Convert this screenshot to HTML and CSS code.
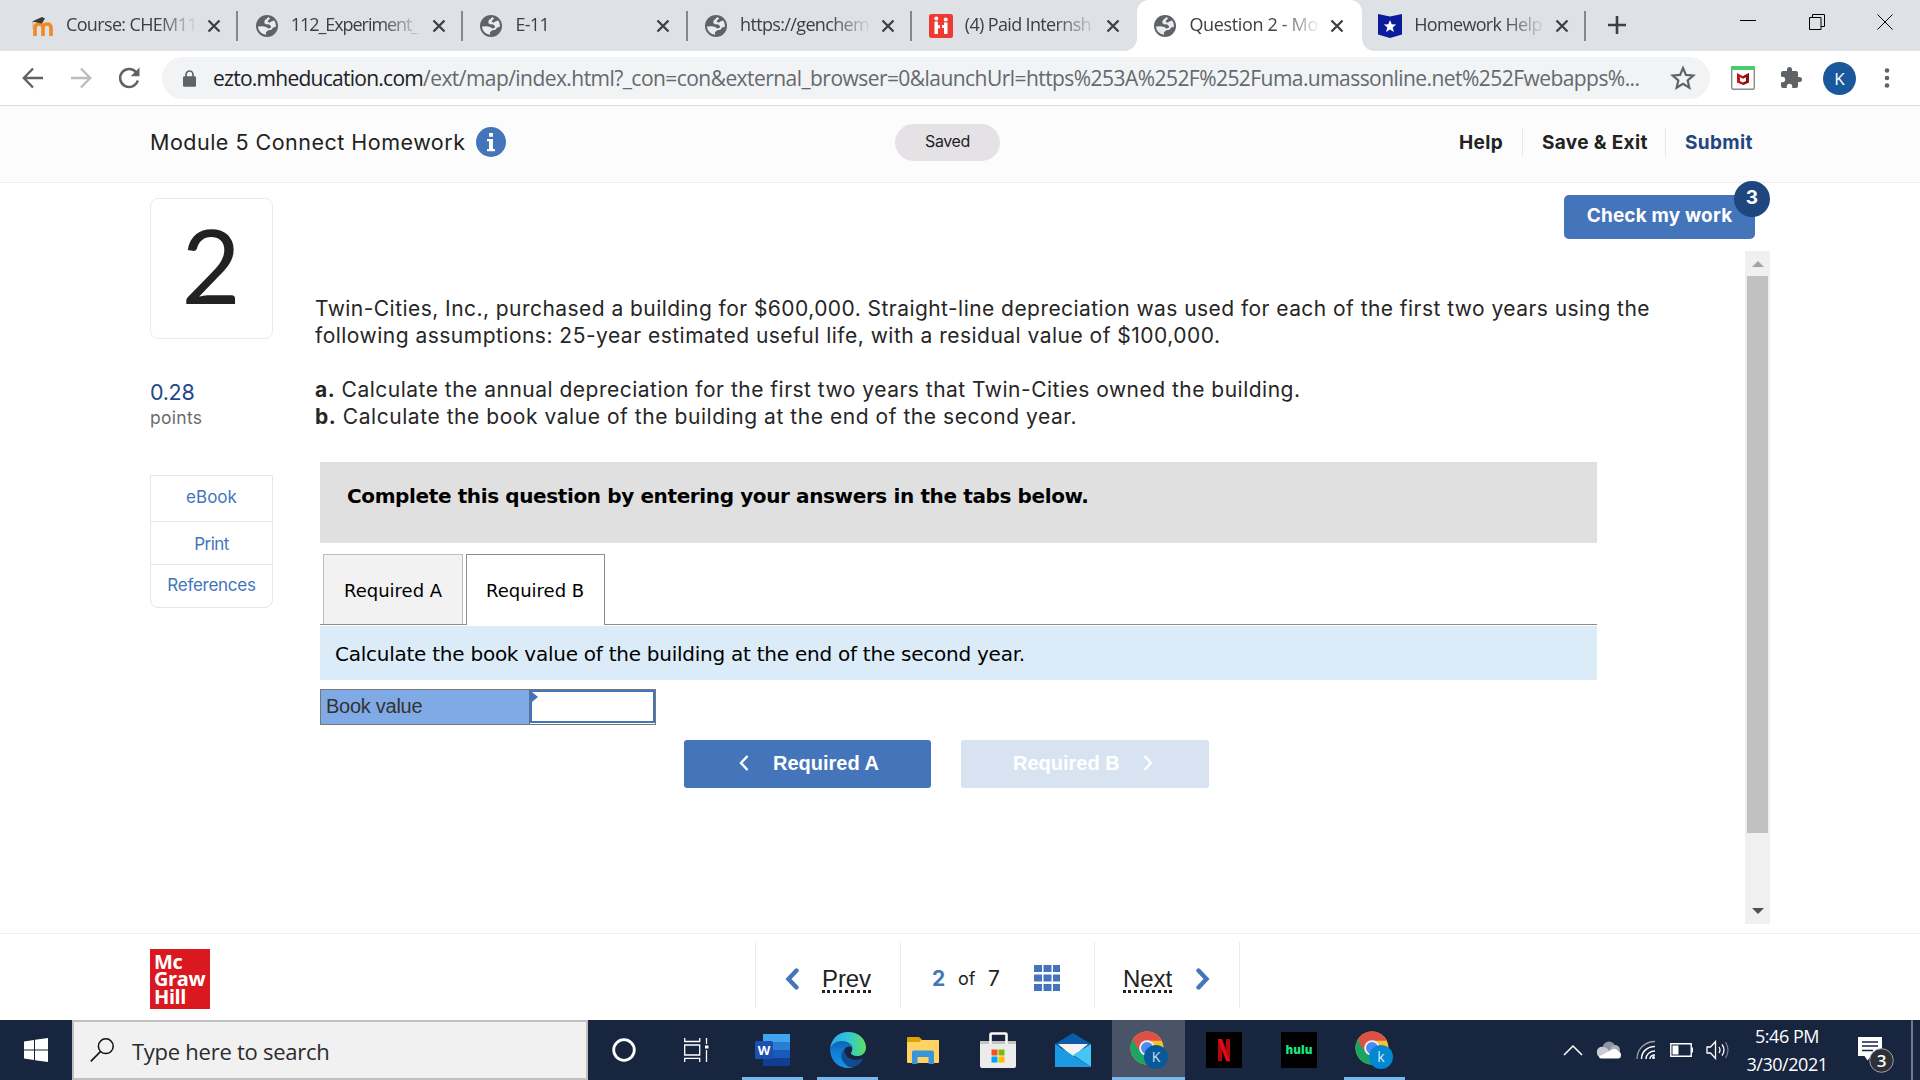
FILE: index.html
```html
<!DOCTYPE html>
<html lang="en">
<head>
<meta charset="utf-8">
<title>Question 2 - Module 5 Connect Homework</title>
<link rel="stylesheet" href="styles.css">
</head>
<body>
<svg class="defs" aria-hidden="true">
  <symbol id="globe" viewBox="0 0 24 24"><circle cx="12" cy="12" r="11" fill="#5f6368"/><path d="M13.500 3 9.600 6.500l-.3 2.400 1.700 1.300 3.400.2 1.800 2-.8 1.600-2.200.5-2-1.500-3.500-.8-4.800.3a9.200 9.200 0 0 0 8.300 8.300l-.3-2.600 2.500-2 3-.4 1.800-2.300 2.800-.7a9 9 0 0 0-1.800-6.300l-2.400.7-2.500 1.500-1.700-1.200 1-1.700 1.600-1z" fill="#e9ebee"/></symbol>
  <symbol id="close" viewBox="0 0 14 14"><path d="M1.500 1.500l11 11M12.500 1.500l-11 11" stroke="#3c4043" stroke-width="2.300" fill="none"/></symbol>
  <symbol id="chrome" viewBox="0 0 34 34"><circle cx="17" cy="17" r="16.500" fill="#fbc02d"/><path d="M17 17 2.700 8.750A16.500 16.500 0 0 0 17 33.500L24 21z" fill="#1da462"/><path d="M2.700 8.750A16.500 16.500 0 0 1 31.300 8.750L31.800 9.700H17L9.500 20z" fill="#dd5144"/><circle cx="17" cy="17" r="7.800" fill="#f1f1f1"/><circle cx="17" cy="17" r="6" fill="#4c8bf5"/></symbol>
</svg>

<div class="tabstrip">
  <div class="tab"><svg class="fav" viewBox="0 0 24 24"><path d="M5 22V14q0-4 4-4t4 4v8M13 22v-8q0-4 4-4t4 4v8" fill="none" stroke="#f08a24" stroke-width="3.600"/><path d="M2 7.500 12 3l3 1.500-3 5-5-1z" fill="#3a3a3a"/><path d="M3 8v7" stroke="#c9a98a" stroke-width="1"/></svg><span class="title"><span class="seg">Course: CHEM11</span></span><svg class="x"><use href="#close"/></svg></div>
  <div class="tab"><svg class="fav"><use href="#globe"/></svg><span class="title"><span class="seg t-exp">112_Experiment_</span></span><svg class="x"><use href="#close"/></svg></div>
  <div class="tab"><svg class="fav"><use href="#globe"/></svg><span class="title"><span class="seg">E-11</span></span><svg class="x"><use href="#close"/></svg></div>
  <div class="tab"><svg class="fav"><use href="#globe"/></svg><span class="title"><span class="seg">https://genchem</span></span><svg class="x"><use href="#close"/></svg></div>
  <div class="tab no-sep"><svg class="fav" viewBox="0 0 24 24"><rect width="24" height="24" rx="2.500" fill="#ef3a34"/><g fill="#fff"><circle cx="7.300" cy="4.500" r="2"/><circle cx="16.700" cy="5.500" r="2"/><path d="M5.500 7.500h3.400v3.700h2.100v3H8.900V20H5.500zM15 8.500h3.500V20H15v-6h-2v-3h2z"/></g></svg><span class="title"><span class="seg">(4) Paid Internsh</span></span><svg class="x"><use href="#close"/></svg></div>
  <div class="tab active"><svg class="fav"><use href="#globe"/></svg><span class="title"><span class="seg t-q">Question 2 - Mo</span></span><svg class="x"><use href="#close"/></svg></div>
  <div class="tab"><svg class="fav" viewBox="0 0 24 24"><path d="M0 0l12 2.500L24 0v20.500L12 24 0 20.500z" fill="#0a1c9b"/><path d="M12 6l1.700 4.300 4.500.3-3.500 2.900 1.200 4.500-3.900-2.500-3.900 2.500 1.200-4.500-3.500-2.900 4.500-.3z" fill="#fff"/></svg><span class="title"><span class="seg">Homework Help</span></span><svg class="x"><use href="#close"/></svg></div>
  <svg class="newtab" viewBox="0 0 18 18"><path d="M9 0v18M0 9h18" stroke="#3c4043" stroke-width="2.600"/></svg>
  <div class="winctl">
    <svg viewBox="0 0 16 16"><path d="M0 6.500h16" stroke="#000"/></svg>
    <svg viewBox="0 0 16 16" fill="none" stroke="#000"><path d="M.5 3.500h11.500v12H.5zM3.500 3.500V.500h12v12H12"/></svg>
    <svg viewBox="0 0 16 16"><path d="M.5.5l15 15M15.500.5l-15 15" stroke="#000"/></svg>
  </div>
</div>

<div class="toolbar">
  <svg class="nav" viewBox="0 0 24 24"><path d="M22 12H3M12 2.500 2.800 12l9.200 9.500" fill="none" stroke="#5f6368" stroke-width="2.400"/></svg>
  <svg class="nav" viewBox="0 0 24 24"><path d="M2 12h19M12 2.500 21.200 12 12 21.500" fill="none" stroke="#bcbdc0" stroke-width="2.400"/></svg>
  <svg class="nav" viewBox="0 0 24 24"><path d="M19.600 7A9 9 0 1 0 20.800 14.500" fill="none" stroke="#5f6368" stroke-width="2.500"/><path d="M22.500 1.500v8.800h-8.800z" fill="#5f6368"/></svg>
  <div class="omnibox">
    <svg class="lock" viewBox="0 0 13 17"><path d="M3 7V4.500a3.500 3.500 0 0 1 7 0V7" fill="none" stroke="#5f6368" stroke-width="1.700"/><rect y="6.300" width="13" height="10.500" rx="1.300" fill="#5f6368"/></svg>
    <div class="url"><span class="seg host">ezto.mheducation.com</span><span class="seg path">/ext/map/index.html?_con=con&amp;external_browser=0&amp;launchUrl=https%253A%252F%252Fuma.umassonline.net%252Fwebapps%...</span></div>
    <svg class="star" viewBox="0 0 24 24"><path d="M12 2.800l2.700 6.300 6.800.6-5.200 4.500 1.600 6.700-5.900-3.600-5.900 3.600 1.600-6.700L2.500 9.700l6.800-.6z" fill="none" stroke="#5f6368" stroke-width="2"/></svg>
  </div>
  <svg class="ext" viewBox="0 0 24 24"><rect x=".7" y=".7" width="22.600" height="22.600" rx="1.500" fill="#fff" stroke="#8a8a8a" stroke-width="1.400"/><path d="M0 0h24v4H0z" fill="#49cc6b"/><path d="M6 7l6 3.200L18 7v9.500L12 19l-6-2.500z" fill="#c01818"/><path d="M12 10.200 18 7v9.500L12 19z" fill="#8e0f0f"/><path d="M9 11.200l3 1.600 3-1.600v3.900l-3 1.300-3-1.300z" fill="#fff"/></svg>
  <svg class="puzzle" viewBox="0 0 24 24"><path d="M20.500 11H19V7a2 2 0 0 0-2-2h-4V3.500a2.500 2.500 0 0 0-5 0V5H4a2 2 0 0 0-2 2v3.800h1.500a2.700 2.700 0 0 1 0 5.400H2V20a2 2 0 0 0 2 2h3.800v-1.500a2.700 2.700 0 0 1 5.400 0V22H17a2 2 0 0 0 2-2v-4h1.500a2.500 2.500 0 0 0 0-5z" fill="#5f6368"/></svg>
  <div class="avatar">K</div>
  <svg class="dots" viewBox="0 0 6 20"><g fill="#5f6368"><circle cx="3" cy="2.500" r="2.300"/><circle cx="3" cy="10" r="2.300"/><circle cx="3" cy="17.500" r="2.300"/></g></svg>
</div>

<header class="page-head">
  <h1>Module 5 Connect Homework</h1>
  <svg class="info" viewBox="0 0 30 30"><circle cx="15" cy="15" r="15" fill="#4475ba"/><path d="M13 6h4v3.800h-4zM11 12h6v10h2v2.300h-8V22h2v-7.700h-2z" fill="#fff"/></svg>
  <div class="saved">Saved</div>
  <nav class="actions"><a class="help">Help</a><a class="exit">Save &amp; Exit</a><a class="submit">Submit</a></nav>
</header>

<main class="main">
  <aside class="side">
    <div class="number">2</div>
    <div class="score">0.28</div>
    <div class="points">points</div>
    <div class="links">
      <a>eBook</a>
      <a class="print">Print</a>
      <a class="refs">References</a>
    </div>
  </aside>
  <section class="work">
    <div class="check-row"><button class="check">Check my work<span class="count">3</span></button></div>
    <div class="pane">
      <div class="question">
        <p class="prompt"><span class="seg q1">Twin-Cities, Inc., purchased a building for $600,000. Straight-line depreciation was used for each of the first two years using the</span><br><span class="seg q2">following assumptions: 25-year estimated useful life, with a residual value of $100,000.</span></p>
        <p class="prompt"><span class="seg q3"><b>a.</b> Calculate the annual depreciation for the first two years that Twin-Cities owned the building.</span><br><span class="seg q4"><b>b.</b> Calculate the book value of the building at the end of the second year.</span></p>
        <div class="sheet">
          <div class="banner">Complete this question by entering your answers in the tabs below.</div>
          <div class="qtabs"><div class="qtab">Required A</div><div class="qtab on">Required B</div></div>
          <div class="instr">Calculate the book value of the building at the end of the second year.</div>
          <div class="entry"><div class="label">Book value</div><div class="field"></div></div>
          <div class="steps">
            <button class="step"><svg viewBox="0 0 10 16"><path d="M8.500 1 2 8l6.500 7" fill="none" stroke="#fff" stroke-width="2.400"/></svg>Required A</button>
            <button class="step off">Required B<svg viewBox="0 0 10 16"><path d="M1.500 1 8 8l-6.500 7" fill="none" stroke="#fff" stroke-width="2.400"/></svg></button>
          </div>
        </div>
      </div>
      <div class="scroll"><i class="up"></i><div class="thumb"></div><i class="down"></i></div>
    </div>
  </section>
</main>

<footer class="foot">
  <div class="logo"><span>Mc</span><span>Graw</span><span>Hill</span></div>
  <div class="pager">
    <a class="prev"><svg viewBox="0 0 14 22"><path d="M11.500 2.500 3.500 11l8 8.500" fill="none" stroke="#4475ba" stroke-width="4.400" stroke-linecap="round"/></svg><span>Prev</span></a>
    <div class="pos"><b>2</b><span class="of">of</span><span class="total">7</span><svg viewBox="0 0 26 26" fill="#4475ba"><path d="M0 0h8v7H0zM9.500 0h8v7h-8zM19 0h7v7h-7zM0 9.500h8v7H0zM9.500 9.500h8v7h-8zM19 9.500h7v7h-7zM0 19h8v7H0zM9.500 19h8v7h-8zM19 19h7v7h-7z"/></svg></div>
    <a class="next"><span>Next</span><svg viewBox="0 0 14 22"><path d="M2.500 2.500 10.500 11l-8 8.500" fill="none" stroke="#4475ba" stroke-width="4.400" stroke-linecap="round"/></svg></a>
  </div>
</footer>

<div class="taskbar">
  <div class="start"><svg viewBox="0 0 24 24" fill="#fff"><path d="M0 3.500 10 2v9.500H0zM11 1.800 24 0v11.500H11zM0 12.500h10V22L0 20.500zM11 12.500h13V24l-13-1.800z"/></svg></div>
  <div class="search"><svg viewBox="0 0 24 24"><circle cx="15.800" cy="8.200" r="7.400" fill="none" stroke="#111" stroke-width="1.500"/><path d="M10.500 13.500.8 23.300" stroke="#111" stroke-width="1.700"/></svg><span>Type here to search</span></div>
  <div class="slot sys"><svg width="26" height="26" viewBox="0 0 26 26"><circle cx="13" cy="13" r="10.300" fill="none" stroke="#fff" stroke-width="2.800"/></svg></div>
  <div class="slot sys2"><svg width="26" height="24" viewBox="0 0 26 24" fill="none" stroke="#fff" stroke-width="1.300"><path d="M.7 0v3.500h15V0M.7 7h15v10H.7zM.7 24v-3.700h15V24M22.500 0v6M22.500 12v12"/><path d="M21 7.500h3.500v3H21z" fill="#fff" stroke="none"/></svg></div>
  <div class="slot run"><svg width="36" height="34" viewBox="0 0 36 34"><rect x="8" y="1" width="27" height="8" fill="#41a5ee"/><rect x="8" y="9" width="27" height="8" fill="#2b7cd3"/><rect x="8" y="17" width="27" height="8" fill="#185abd"/><rect x="8" y="25" width="27" height="8" rx="1" fill="#103f91"/><rect y="8" width="18" height="18" rx="1.500" fill="#1b50b0"/><text x="9" y="22" font-size="13" font-weight="700" text-anchor="middle" fill="#fff">W</text></svg></div>
  <div class="slot run"><svg width="36" height="36" viewBox="0 0 36 36"><defs><linearGradient id="eg" x1="0" x2="1"><stop offset="0" stop-color="#2fa8ea"/><stop offset=".5" stop-color="#30c5d8"/><stop offset="1" stop-color="#5fe05a"/></linearGradient><linearGradient id="eb" y1="0" y2="1" x1="0" x2="0"><stop offset="0" stop-color="#0c64b4"/><stop offset=".5" stop-color="#1283dc"/><stop offset="1" stop-color="#1a90e6"/></linearGradient></defs><path d="M0 17C1 7 8 0 18 0c11 0 18 7.500 18 15.500 0 6-4.500 8.500-8.500 8.500-4.500 0-6.500-1.500-6.500-3 0-1 1.300-1.800 1.300-4.500C22.300 12.500 18 10 12.500 10 6 10 1.500 13 0 17z" fill="url(#eg)"/><path d="M0 17c1.500-4.500 6-8 12-8 5.500 0 9.800 3 10.300 7-2-1.800-6-2.200-8 1.500-2 4-.5 9 3 12.500 2 2 4 3.500 6 5-1.700.7-3.300 1-5.300 1C8 36 0 28 0 17z" fill="url(#eb)"/><path d="M14.500 17c-4 4-4 9-1 13 3 4.500 7 6 10 5 4-1 7.500-4 9.500-7.500.5-1-.3-1.200-1-.9-2 1-4 1.400-6 1.400-6.500 0-11.500-4-11.500-11z" fill="#124b8f"/><path d="M15.500 16c2.200-2.500 6.500-2 6.600.8 0 2-1.300 2.800-1.300 4.200 0 2 2.700 3.200 6 3.200-2 1.200-6 .8-8.500-1.700-2-1.800-3.200-4-2.800-6.500z" fill="#18253f"/></svg></div>
  <div class="slot"><svg width="34" height="30" viewBox="0 0 34 30"><path d="M1 5h32v22q0 1-1 1H2q-1 0-1-1z" fill="#ffd363"/><path d="M1 3q0-1 1-1h11l3 2.500L13 7H1z" fill="#e0a106"/><path d="M6 29V17q0-1.500 1.500-1.500h19q1.500 0 1.500 1.500v12h-5.500v-7h-11v7z" fill="#3a94db"/></svg></div>
  <div class="slot"><svg width="36" height="36" viewBox="0 0 36 36"><path d="M0 9h36v25q0 2-2 2H2q-2 0-2-2z" fill="#ececec"/><path d="M0 9h36v3H0z" fill="#c4c4c4"/><path d="M10.500 12V2.500q0-1 1-1h14q1 0 1 1V12" fill="none" stroke="#fafafa" stroke-width="2.600"/><path d="M11.500 17.500h6v6h-6z" fill="#f25022"/><path d="M18.500 17.500h6v6h-6z" fill="#7fba00"/><path d="M11.500 24.500h6v6h-6z" fill="#00a4ef"/><path d="M18.500 24.500h6v6h-6z" fill="#ffb900"/></svg></div>
  <div class="slot"><svg width="36" height="34" viewBox="0 0 36 34"><path d="M0 11 18 0l18 11v3H0z" fill="#0a5ca8"/><path d="M3 11h30L18 24z" fill="#f3f3f3"/><path d="M18 22 36 11v23z" fill="#43c5f5"/><path d="M0 34V11l36 23z" fill="#1b9be3"/></svg></div>
  <div class="slot run here"><svg width="38" height="38" viewBox="0 0 38 38"><use href="#chrome" width="34" height="34"/><circle cx="26" cy="26" r="12" fill="#08589a"/><text x="26" y="31" font-size="14" text-anchor="middle" fill="#cfe0ee">K</text></svg></div>
  <div class="slot"><svg width="36" height="36" viewBox="0 0 36 36"><path d="M0 0h36v36H0z"/><path d="M12 7h4v22l-4 .6zM20 7h4v22.600l-4-.6z" fill="#b1060f"/><path d="M12 7h4l8 22.600-4-.6z" fill="#e50914"/></svg></div>
  <div class="slot"><svg width="36" height="36" viewBox="0 0 36 36"><path d="M0 0h36v36H0z"/><text x="18" y="22" font-size="11.500" font-weight="800" text-anchor="middle" fill="#1ce783">hulu</text></svg></div>
  <div class="slot run"><svg width="38" height="38" viewBox="0 0 38 38"><use href="#chrome" width="34" height="34"/><circle cx="26" cy="26" r="12" fill="#0288d1"/><text x="26" y="31" font-size="14" text-anchor="middle" fill="#d8ecf8">k</text></svg></div>
  <div class="tray">
    <svg class="t1" width="20" height="12" viewBox="0 0 20 12"><path d="M1 11 10 2l9 9" fill="none" stroke="#fff" stroke-width="1.500"/></svg>
    <svg class="t2" width="26" height="18" viewBox="0 0 26 18"><circle cx="13" cy="7" r="6.500" fill="#8c93a1"/><circle cx="19" cy="9" r="5" fill="#a9aeb9"/><path d="M1 12a5 5 0 0 1 6-6q4 0 6 4l-9 6q-3-1-3-4z" fill="#c9ccd3"/><path d="M3 15.500 13 10l4-2q3-1 5 2 3 1 3 4 0 3.500-3 3.500H5q-2 0-2-2z" fill="#fff"/></svg>
    <svg class="t3" width="20" height="20" viewBox="0 0 20 20" fill="none" stroke="#fff"><path d="M1 19C1 9 9 1.500 19 1.500" stroke="#9aa2b1" stroke-width="1.300"/><path d="M5.500 19C5.500 12 11 6.500 19 6.500M10 19c0-4.500 4-8 9-8M14 19c0-2.500 2-4 5-4" stroke-width="1.400"/><circle cx="17.500" cy="17.500" r="1.500" fill="#fff" stroke="none"/></svg>
    <svg class="t4" width="24" height="14" viewBox="0 0 24 14"><path d="M.8.8h20.400v12.400H.8z" fill="none" stroke="#fff" stroke-width="1.400"/><path d="M2.500 2.500h6v9h-6zM21.500 4.500H23v5h-1.500z" fill="#fff"/></svg>
    <svg class="t5" width="24" height="20" viewBox="0 0 24 20" fill="none" stroke="#fff" stroke-width="1.300"><path d="M1 7h3.500L9.500 1.500v17L4.500 13H1zM13 7q2 3 0 6M16 4.500q4 5.500 0 11"/><path d="M19.500 2q5 8 0 16" stroke="#737c8f"/></svg>
    <div class="clock"><span>5:46 PM</span><span>3/30/2021</span></div>
    <svg class="t6" width="38" height="36" viewBox="0 0 38 36"><path d="M0 0h24v19H13l-3.500 4.500L6.500 19H0z" fill="#fff"/><path d="M4 5h16M4 9h16M4 13.500h11" stroke="#18253f" stroke-width="1.400"/><circle cx="23.500" cy="23.500" r="11.800" fill="#2d3036" stroke="#9b9ea5"/><text x="23.500" y="29.500" font-size="17" font-weight="600" text-anchor="middle" fill="#fff">3</text></svg>
    <i class="desk"></i>
  </div>
</div>
</body>
</html>
```
FILE: styles.css
```css
* { box-sizing: border-box; }
body { margin: 0; width: 1920px; height: 1080px; overflow: hidden; background: #fff; color: #222; font-family: Inter, "Liberation Sans", sans-serif; display: flex; flex-direction: column; }
svg { display: block; flex: none; }
h1, p { margin: 0; font-weight: 400; }
button { border: 0; padding: 0; font: inherit; }
.seg { white-space: pre; }
.defs { position: absolute; width: 0; height: 0; }

/* Browser tab strip */
.tabstrip { height: 51px; flex: none; background: #dee1e6; padding-left: 13.500px; display: flex; font: 18px/50px "Open Sans", "Noto Sans", sans-serif; letter-spacing: -.65px; color: #3c4043; }
.tab { width: 224.700px; height: 51px; flex: none; padding-left: 16.500px; display: flex; align-items: center; background: linear-gradient(#85888d, #85888d) right 0 top 11px / 2px 30px no-repeat; }
.tab.no-sep { background: none; }
.tab.active { background: #fff; border-radius: 12px 12px 0 0; position: relative; }
.tab.active::before, .tab.active::after { content: ""; position: absolute; bottom: 0; width: 12px; height: 12px; }
.tab.active::before { left: -12px; background: radial-gradient(circle at 0 0, #dee1e6 11.500px, #fff 12px); }
.tab.active::after { right: -12px; background: radial-gradient(circle at 100% 0, #dee1e6 11.500px, #fff 12px); }
.fav { width: 24px; height: 24px; margin-right: 12px; }
.title { width: 132px; height: 51px; line-height: 48px; overflow: hidden; -webkit-mask-image: linear-gradient(90deg, #000 90px, transparent 132px); mask-image: linear-gradient(90deg, #000 90px, transparent 132px); }
.t-exp { letter-spacing: -1.050px; }
.t-q { letter-spacing: -.35px; }
.x { width: 14px; height: 14px; margin-left: 9px; }
.newtab { width: 18px; height: 18px; margin: 16px 0 0 22px; }
.winctl { margin-left: auto; padding: 14px 27px 0 0; display: flex; gap: 52.500px; }
.winctl svg { width: 16px; height: 16px; }

/* Address bar */
.toolbar { height: 55px; flex: none; border-bottom: 1px solid #dadcde; display: flex; align-items: center; padding-left: 21px; }
.nav { width: 24px; height: 24px; margin-right: 24px; }
.omnibox { width: 1548px; height: 42px; border-radius: 21px; background: #f1f3f4; margin-left: -3px; display: flex; align-items: center; padding-left: 21px; }
.lock { width: 13px; height: 17px; margin-right: 17px; }
.url { width: 1442px; font: 21px/42px "Open Sans", "Noto Sans", sans-serif; display: flex; }
.host { color: #202124; letter-spacing: -.74px; }
.path { color: #65696e; letter-spacing: -.555px; }
.star { width: 26px; height: 26px; margin-left: 15px; }
.ext { width: 24px; height: 24px; margin-left: 21px; }
.puzzle { width: 24px; height: 24px; margin-left: 24px; }
.avatar { width: 33px; height: 33px; border-radius: 50%; background: #19589b; color: #fff; font: 17px/33px "Open Sans", sans-serif; text-align: center; margin-left: 20px; }
.dots { width: 6px; height: 20px; margin-left: 28px; }

/* Assignment header */
.page-head { height: 77px; flex: none; background: #fcfcfc; border-bottom: 1px solid #eee; padding: 0 0 4px 150px; display: flex; align-items: center; }
.page-head h1 { width: 326px; font-size: 21.500px; line-height: 30px; letter-spacing: .49px; white-space: nowrap; }
.info { width: 30px; height: 30px; }
.saved { width: 105px; height: 37px; border-radius: 18.500px; background: #e4e2e5; margin-left: 389px; font-size: 16px; line-height: 35px; letter-spacing: -.4px; text-align: center; }
.actions { margin-left: 440px; display: flex; font-size: 19px; font-weight: 700; line-height: 29px; letter-spacing: .35px; }
.actions a { border-right: 1px solid #e8e8e8; height: 29px; padding-left: 19px; }
.actions .help { width: 83px; }
.actions .exit { width: 143px; }
.actions .submit { border: 0; color: #1f467f; }

/* Question area */
.main { height: 750px; flex: none; padding-left: 150px; display: flex; }
.side { width: 123px; padding-top: 15px; flex: none; }
.number { height: 141px; border: 1px solid #eaeaea; border-radius: 8px; font: 102px/132px Lato, sans-serif; text-align: center; padding-right: 1px; }
.score { margin-top: 38px; font-size: 21.500px; line-height: 30px; letter-spacing: -.3px; color: #24478c; }
.points { font-size: 17.500px; line-height: 22px; letter-spacing: .3px; color: #6b6b6b; }
.links { margin-top: 46px; border: 1px solid #e6e6e6; border-radius: 0 0 8px 8px; font-size: 17px; color: #4475ba; text-align: center; }
.links a { display: block; height: 46px; line-height: 43px; border-bottom: 1px solid #e6e6e6; }
.links .print { height: 43px; line-height: 45px; letter-spacing: -.5px; }
.links .refs { border: 0; height: 42px; line-height: 41px; letter-spacing: -.27px; }
.work { margin-left: 42px; width: 1455px; }
.check-row { height: 68px; padding-top: 12px; display: flex; justify-content: flex-end; }
.check { position: relative; width: 191px; height: 44px; margin-right: 15px; padding-bottom: 3px; border-radius: 5px; background: #4475ba; color: #fff; font-size: 19px; font-weight: 700; line-height: 41px; letter-spacing: .17px; }
.count { position: absolute; right: -15px; top: -14px; width: 36px; height: 36px; border-radius: 50%; background: #1f467f; line-height: 33px; text-align: center; }
.pane { height: 673px; display: flex; }
.question { width: 1430px; padding-top: 44px; }
.prompt { font-size: 21px; line-height: 27px; height: 81px; color: #262626; }
.q1 { letter-spacing: .447px; }
.q2 { letter-spacing: .484px; }
.q3 { letter-spacing: .491px; }
.q4 { letter-spacing: .55px; }
.scroll { width: 25px; background: #f0f0f0; display: flex; flex-direction: column; align-items: center; }
.thumb { width: 21px; height: 557px; background: #c1c1c1; }
.up, .down { border: 6px solid transparent; border-top: 0; border-bottom-color: #a3a3a3; margin: 10px 0 9px; }
.down { border: 6px solid transparent; border-bottom: 0; border-top-color: #505050; margin: 75px 0 0; }

.sheet { margin: 5px 0 0 5px; width: 1277px; color: #000; font-family: "DejaVu Sans", sans-serif; }
.banner { height: 81px; padding: 21px 0 0 27px; background: #e0e0e0; font-size: 20px; font-weight: 700; line-height: 27px; letter-spacing: -.38px; }
.qtabs { margin-top: 11px; height: 71px; padding-left: 3px; display: flex; gap: 3px; border-bottom: 1px solid #8c8c8c; }
.qtab { width: 140px; height: 70px; border: 1px solid #bdbdbd; border-bottom: 0; background: #f2f2f2; font-size: 18px; line-height: 72px; padding-left: 20px; }
.qtab.on { width: 139px; height: 71px; border-color: #8c8c8c; background: #fff; padding-left: 19px; }
.instr { margin-top: 1px; height: 54px; padding-left: 15px; background: #dbecf8; font-size: 20px; line-height: 56px; letter-spacing: -.25px; }
.entry { margin-top: 9px; width: 336px; height: 36px; border: 1px solid #777; display: flex; font: 20px/32px "Liberation Sans", sans-serif; color: #333; }
.label { width: 209px; border-right: 1px solid #5c7090; background: #7faae5; padding-left: 5px; letter-spacing: -.27px; }
.field { width: 125px; height: 33px; border: 2px solid #4475ba; }
.field::before { content: ""; display: block; width: 0; border: 5px solid transparent; border-right: 0; border-left: 6px solid #4475ba; }
.steps { margin: 15px 0 0 364px; display: flex; gap: 30px; }
.step { width: 247px; height: 48px; border-radius: 3px; background: #4475ba; color: #fff; font: 700 20px/46px "Liberation Sans", sans-serif; display: flex; align-items: center; padding: 0 0 2px 55px; }
.step svg { width: 10px; height: 16px; margin-right: 24px; }
.step.off { width: 248px; background: #d8e3f1; padding-left: 52px; }
.step.off svg { margin: 0 0 0 23px; }

/* Pager */
.foot { height: 87px; flex: none; border-top: 1px solid #efefef; padding-left: 150px; display: flex; }
.logo { width: 60px; height: 60px; margin-top: 15px; background: #d9191f; color: #fff; font: 700 20px/17.400px "Open Sans", sans-serif; padding: 4px 0 0 4px; letter-spacing: -.4px; display: flex; flex-direction: column; }
.pager { margin: 8px 0 0 545px; height: 66px; display: flex; border-right: 1px solid #ececec; }
.pager > * { border-left: 1px solid #ececec; display: flex; align-items: center; padding-top: 7px; }
.pager a { font: 24px/30px "Liberation Sans", sans-serif; }
.pager a span { border-bottom: 3px dotted #222; line-height: 27px; height: 28px; letter-spacing: -.1px; }
.pager svg { width: 14px; height: 22px; }
.prev { width: 145px; padding-left: 29px; gap: 23px; }
.next { width: 145px; padding-left: 28px; gap: 24px; }
.pos { width: 194px; padding-left: 31px; font-size: 21px; }
.pos b { color: #4475ba; width: 26px; }
.pos .of { font-size: 18px; width: 30px; }
.pos .total { width: 46px; }
.pos svg { width: 26px; height: 26px; margin-top: -2px; }

/* Windows taskbar */
.taskbar { height: 60px; flex: none; background: #18253f; display: flex; font-family: "Open Sans", "Noto Sans", sans-serif; }
.start { width: 72px; padding: 18px 0 0 24px; }
.start svg, .search svg { width: 24px; height: 24px; }
.search { width: 516px; border: 2px solid #c0c0c0; background: #f1f1f1; display: flex; padding: 16px 0 0 16px; font-size: 22px; letter-spacing: -.26px; color: #2b2b2b; line-height: 26px; }
.search svg { margin-right: 18px; }
.slot { width: 75.200px; height: 60px; display: flex; justify-content: center; align-items: center; }
.slot.sys { width: 72px; }
.slot.sys2 { width: 75px; padding-right: 2px; }
.run { background: linear-gradient(#76b9ed, #76b9ed) center bottom / 61px 3px no-repeat; }
.run.here { background: linear-gradient(#76b9ed, #76b9ed) center bottom / 73px 3px no-repeat, linear-gradient(#4a5468, #4a5468) center / 73px 60px no-repeat; }
.tray { margin-left: auto; display: flex; align-items: center; }
.t2 { margin-left: 13px; }
.t3 { margin-left: 14px; }
.t4 { margin-left: 14px; }
.t5 { margin-left: 12px; }
.clock { width: 90px; margin-left: 12px; display: flex; flex-direction: column; align-items: center; color: #fff; font-size: 18px; line-height: 28px; letter-spacing: -.45px; }
.t6 { margin: 10px 0 0 26px; }
.desk { width: 2px; height: 60px; background: #737b8b; margin: 0 7px 0 15px; }
```
